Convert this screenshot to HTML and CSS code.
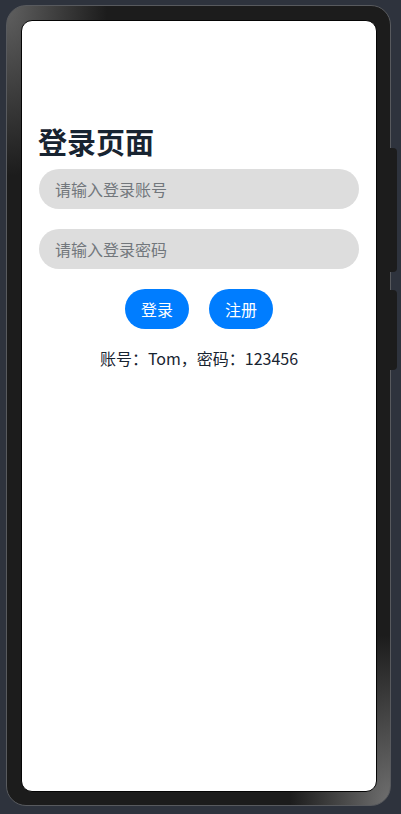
FILE: index.html
```html
<!DOCTYPE html>
<html lang="zh-CN">
<head>
<meta charset="utf-8">
<title>登录页面</title>
<link rel="stylesheet" href="styles.css">
</head>
<body>
<div class="phone">
  <div class="side-btn side-btn-1"></div>
  <div class="side-btn side-btn-2"></div>
  <div class="screen">
    <h1 class="title">登录页面</h1>
    <input class="field" type="text" placeholder="请输入登录账号">
    <input class="field" type="password" placeholder="请输入登录密码">
    <div class="actions">
      <button class="btn">登录</button>
      <button class="btn">注册</button>
    </div>
    <p class="hint">账号：Tom，密码：123456</p>
  </div>
</div>
</body>
</html>
```
FILE: styles.css
```css
html, body {
  margin: 0;
  padding: 0;
}
body {
  width: 401px;
  height: 814px;
  background: #2e333d;
  overflow: hidden;
  font-family: "Noto Sans CJK SC", "Noto Sans", sans-serif;
}
.phone {
  position: relative;
  box-sizing: border-box;
  width: 385px;
  height: 801px;
  margin: 5px 0 0 6px;
  padding: 14px 13px 13px 14px;
  border: 1px solid #585a5e;
  border-radius: 20px;
  background:
    radial-gradient(ellipse 100px 170px at 0 0, #606060 0%, rgba(28,28,28,0) 100%),
    radial-gradient(ellipse 100px 170px at 100% 100%, #707070 0%, rgba(28,28,28,0) 100%),
    #1c1c1c;
}
.side-btn {
  position: absolute;
  left: 383px;
  width: 7px;
  background: #1c1c1c;
  border-radius: 0 4px 4px 0;
}
.side-btn-1 { top: 142px; height: 124px; }
.side-btn-2 { top: 284px; height: 80px; }
.screen {
  box-sizing: border-box;
  height: 100%;
  background: #ffffff;
  border: 1px solid #050505;
  border-radius: 11px;
  padding: 103px 17px 0 17px;
  display: flex;
  flex-direction: column;
}
.title {
  margin: 0 0 10px -1px;
  font-size: 29px;
  line-height: 35px;
  font-weight: 700;
  color: #182431;
}
.field {
  box-sizing: border-box;
  width: 320px;
  height: 40px;
  margin: 0 0 20px 0;
  padding: 0 16px;
  border: none;
  outline: none;
  border-radius: 20px;
  background: #dddddd;
  font-family: inherit;
  font-size: 16px;
  color: #182431;
}
.field::placeholder {
  color: #72777c;
}
.actions {
  display: flex;
  justify-content: center;
  gap: 20px;
}
.btn {
  width: 64px;
  height: 40px;
  padding: 0;
  border: none;
  border-radius: 20px;
  background: #007dff;
  color: #ffffff;
  font-family: inherit;
  font-size: 16px;
  font-weight: 400;
}
.hint {
  margin: 18px 0 0 0;
  text-align: center;
  font-size: 16px;
  line-height: 22px;
  color: #182431;
}
```
